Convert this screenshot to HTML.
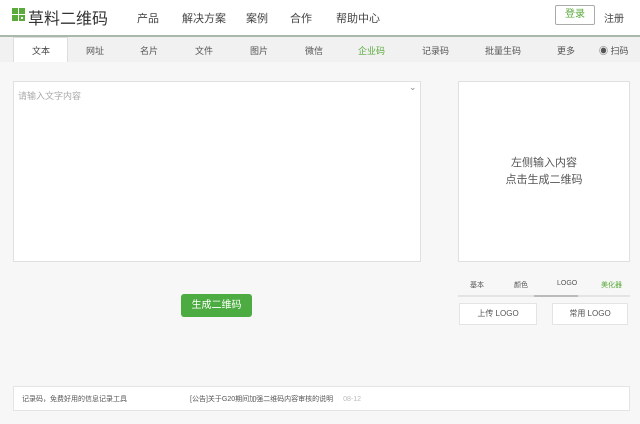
<!DOCTYPE html>
<html><head><meta charset="utf-8"><style>
*{margin:0;padding:0;box-sizing:border-box}
body{width:640px;height:424px;background:#f7f7f7;font-family:"Liberation Sans","Noto Sans CJK SC",sans-serif;position:relative;overflow:hidden;color:#555}
.a{position:absolute;white-space:nowrap}
</style></head><body>
<div class="a" style="left:0;top:0;width:640px;height:36px;background:#fff"></div>
<div class="a" style="left:0;top:35px;width:640px;height:2px;background:#a9b8ab"></div>
<div class="a" style="left:0;top:37px;width:640px;height:25px;background:#f1f1f1"></div>
<div class="a" style="left:12px;top:8px;width:6px;height:6px;background:#5aaa3c"></div>
<div class="a" style="left:19px;top:8px;width:6px;height:6px;background:#5aaa3c"></div>
<div class="a" style="left:12px;top:15px;width:6px;height:6px;background:#5aaa3c"></div>
<div class="a" style="left:19px;top:15px;width:6px;height:6px;border:2px solid #5aaa3c"></div>
<div class="a" style="left:28px;top:5px;font-size:16px;color:#333">草料二维码</div>
<div class="a" style="left:137px;top:10px;font-size:11px;color:#444">产品</div>
<div class="a" style="left:182px;top:10px;font-size:11px;color:#444">解决方案</div>
<div class="a" style="left:246px;top:10px;font-size:11px;color:#444">案例</div>
<div class="a" style="left:290px;top:10px;font-size:11px;color:#444">合作</div>
<div class="a" style="left:336px;top:10px;font-size:11px;color:#444">帮助中心</div>
<div class="a" style="left:555px;top:5px;width:40px;height:20px;border:1px solid #aaa;border-radius:2px;background:#fff;font-size:10px;color:#5aaa3c;text-align:center;line-height:18px">登录</div>
<div class="a" style="left:604px;top:10px;font-size:10px;color:#444">注册</div>
<div class="a" style="left:13px;top:37px;width:55px;height:25px;background:#fff;border:1px solid #ddd;border-bottom:none"></div>
<div class="a" style="left:32px;top:44px;font-size:9px;color:#444">文本</div>
<div class="a" style="left:86px;top:44px;font-size:9px;color:#555">网址</div>
<div class="a" style="left:140px;top:44px;font-size:9px;color:#555">名片</div>
<div class="a" style="left:195px;top:44px;font-size:9px;color:#555">文件</div>
<div class="a" style="left:250px;top:44px;font-size:9px;color:#555">图片</div>
<div class="a" style="left:305px;top:44px;font-size:9px;color:#555">微信</div>
<div class="a" style="left:358px;top:44px;font-size:9px;color:#5aaa3c">企业码</div>
<div class="a" style="left:422px;top:44px;font-size:9px;color:#555">记录码</div>
<div class="a" style="left:485px;top:44px;font-size:9px;color:#555">批量生码</div>
<div class="a" style="left:557px;top:44px;font-size:9px;color:#555">更多</div>
<div class="a" style="left:599px;top:44px;font-size:9px;color:#555">◉ 扫码</div>
<div class="a" style="left:13px;top:81px;width:408px;height:181px;background:#fff;border:1px solid #e0e0e0"></div>
<div class="a" style="left:18px;top:89px;font-size:9px;color:#aaa">请输入文字内容</div>
<div class="a" style="left:409px;top:82px;font-size:9px;color:#888">⌄</div>
<div class="a" style="left:458px;top:81px;width:172px;height:181px;background:#fff;border:1px solid #e0e0e0"></div>
<div class="a" style="left:458px;top:155px;width:172px;text-align:center;font-size:11px;color:#555;line-height:17px">左侧输入内容<br>点击生成二维码</div>
<div class="a" style="left:181px;top:294px;width:71px;height:23px;background:#4cac41;border-radius:3px;color:#fff;font-size:10px;text-align:center;line-height:23px">生成二维码</div>
<div class="a" style="left:470px;top:280px;font-size:7px;color:#555">基本</div>
<div class="a" style="left:514px;top:280px;font-size:7px;color:#555">颜色</div>
<div class="a" style="left:557px;top:280px;font-size:7px;color:#555">LOGO</div>
<div class="a" style="left:601px;top:280px;font-size:7px;color:#5aaa3c">美化器</div>
<div class="a" style="left:458px;top:295px;width:172px;height:2px;background:#e4e4e4"></div>
<div class="a" style="left:534px;top:295px;width:44px;height:2px;background:#bbb"></div>
<div class="a" style="left:459px;top:303px;width:78px;height:22px;background:#fff;border:1px solid #e4e4e4;font-size:8px;text-align:center;line-height:20px;color:#555">上传 LOGO</div>
<div class="a" style="left:552px;top:303px;width:76px;height:22px;background:#fff;border:1px solid #e4e4e4;font-size:8px;text-align:center;line-height:20px;color:#555">常用 LOGO</div>
<div class="a" style="left:13px;top:386px;width:617px;height:25px;background:#fff;border:1px solid #e4e4e4"></div>
<div class="a" style="left:22px;top:394px;font-size:7px;color:#555">记录码，免费好用的信息记录工具</div>
<div class="a" style="left:190px;top:394px;font-size:7px;color:#555">[公告]关于G20期间加强二维码内容审核的说明 <span style="color:#bbb;margin-left:8px">08-12</span></div>
</body></html>
